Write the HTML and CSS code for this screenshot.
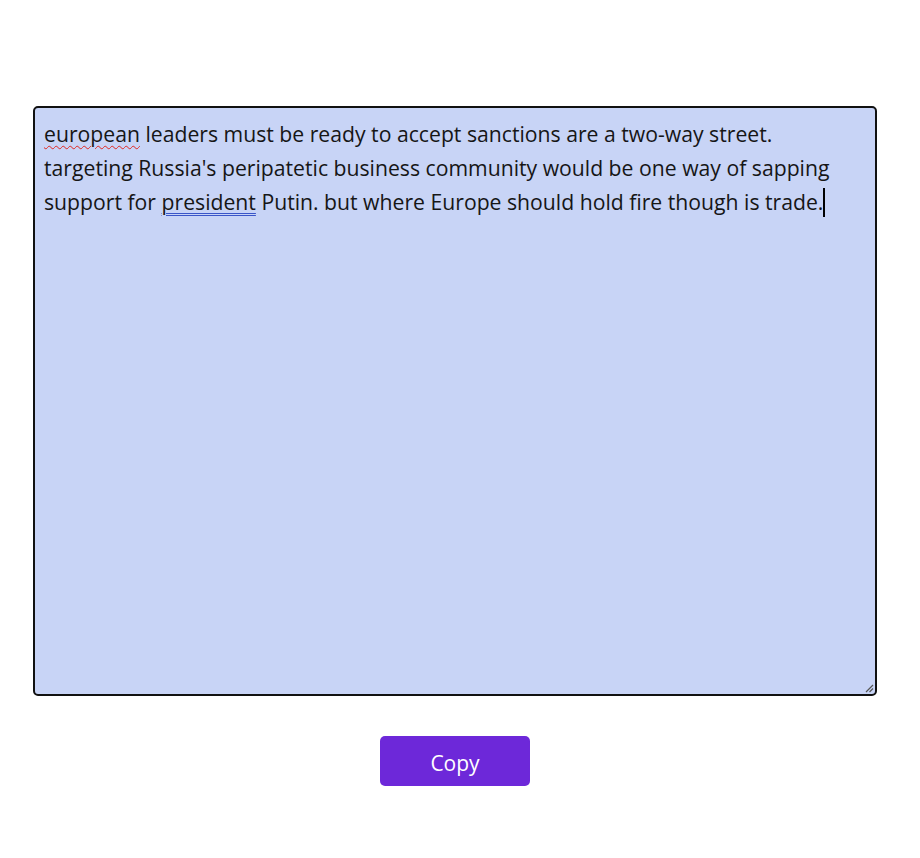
FILE: index.html
```html
<!DOCTYPE html>
<html lang="en">
<head>
<meta charset="utf-8">
<title>Copy text</title>
<link rel="stylesheet" href="styles.css">
</head>
<body>
<main class="page">
  <div class="editor" role="textbox" aria-multiline="true">
    <p class="text"><span class="spell">european</span> leaders must be ready to accept sanctions are a two-way street.<br>targeting Russia's peripatetic business community would be one way of sapping<br>support for <span class="grammar">president</span> Putin. but where Europe should hold fire though is trade.<span class="caret"></span></p>
    <svg class="grip" width="10" height="10" viewBox="0 0 10 10" aria-hidden="true">
      <path d="M9 2 L2 9 M9 5.5 L5.5 9" stroke="#555" stroke-width="1.2" fill="none"/>
    </svg>
  </div>
  <div class="actions">
    <button class="copy" type="button">Copy</button>
  </div>
</main>
</body>
</html>
```
FILE: styles.css
```css
html, body {
  margin: 0;
  padding: 0;
  background: #ffffff;
}
.page {
  width: 844px;
  padding: 106px 0 0 33px;
  font-family: "Open Sans", "Noto Sans", sans-serif;
}
.editor {
  position: relative;
  box-sizing: border-box;
  height: 590px;
  border: 2px solid #111111;
  border-radius: 5px;
  background: #c8d4f6;
  padding: 9px 9px;
}
.text {
  margin: 0;
  font-size: 21.2px;
  line-height: 34px;
  color: #161616;
  white-space: nowrap;
}
.spell {
  text-decoration: underline wavy #e0261f;
  text-decoration-thickness: 1px;
  text-underline-offset: 3px;
}
.grammar {
  text-decoration: underline double #3a55c8;
  text-decoration-thickness: 1px;
  text-underline-offset: 3px;
}
.caret {
  display: inline-block;
  width: 2px;
  height: 29px;
  background: #000;
  vertical-align: -7px;
}
.grip {
  position: absolute;
  right: 1px;
  bottom: 1px;
}
.actions {
  display: flex;
  justify-content: center;
  padding-top: 40px;
}
.copy {
  width: 150px;
  height: 50px;
  padding: 3px 0 0;
  border: 0;
  border-radius: 5px;
  background: #6d28d9;
  color: #ffffff;
  font-family: "Open Sans", "Noto Sans", sans-serif;
  font-size: 21px;
  cursor: pointer;
}
```
